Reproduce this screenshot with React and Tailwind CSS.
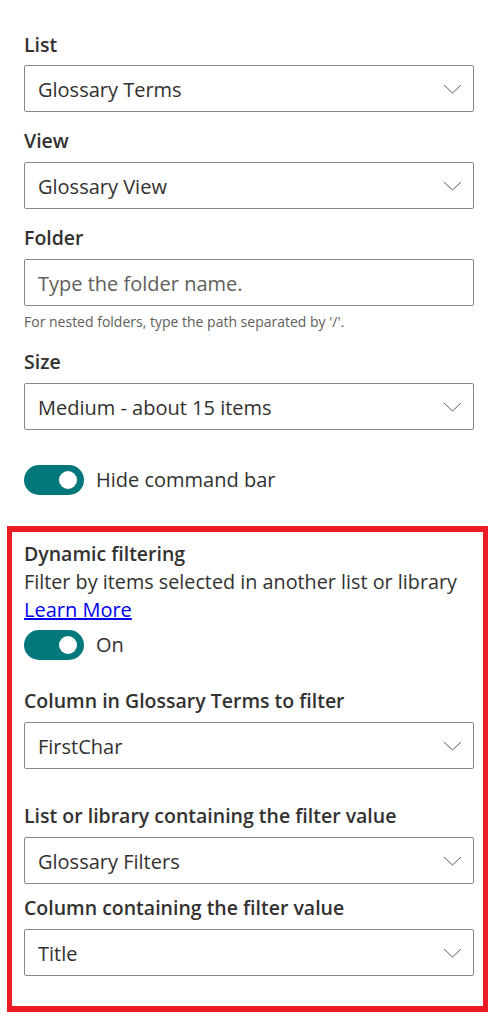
import React from 'react';

const font = "font-['Open_Sans',sans-serif]";

function Chevron() {
  return (
    <svg width="19" height="10" viewBox="0 0 19 10" className="shrink-0">
      <path d="M1 1 L9.5 9 L18 1" fill="none" stroke="#605e5c" strokeWidth="1" />
    </svg>
  );
}

function Label({ children, className = '' }) {
  return <div className={`h-[28px] text-[19.5px] leading-[28px] font-semibold text-[#323130] ${className}`}>{children}</div>;
}

function Dropdown({ value, className = '' }) {
  return (
    <div className={`flex h-[47px] items-center rounded-[2px] border border-[#8a8886] pl-[13px] pr-[11px] ${className}`}>
      <span className="pt-[3px] text-[20px] leading-[28px] text-[#323130]">{value}</span>
      <span className="ml-auto">
        <Chevron />
      </span>
    </div>
  );
}

function Toggle({ label, className = '' }) {
  return (
    <div className={`flex items-center gap-[12px] ${className}`}>
      <div className="flex h-[30px] w-[60px] items-center justify-end rounded-full bg-[#03787c] pr-[7px]">
        <div className="h-[18px] w-[18px] rounded-full bg-white" />
      </div>
      <span className="text-[20px] leading-[28px] text-[#323130]">{label}</span>
    </div>
  );
}

export default function App() {
  return (
    <div className={`min-h-screen w-[498px] bg-white pt-[31px] pb-[19px] ${font}`}>
      <div className="px-6">
        <Label>List</Label>
        <Dropdown value="Glossary Terms" className="mt-[6px]" />

        <Label className="mt-[15px]">View</Label>
        <Dropdown value="Glossary View" className="mt-[7px]" />

        <Label className="mt-[15px]">Folder</Label>
        <div className="mt-[7px] flex h-[47px] items-center rounded-[2px] border border-[#8a8886] pl-[13px]">
          <span className="pt-[3px] text-[20px] leading-[28px] text-[#605e5c]">Type the folder name.</span>
        </div>
        <div className="mt-[6px] h-[20px] text-[14px] leading-[20px] text-[#605e5c]">
          For nested folders, type the path separated by '/'.
        </div>

        <Label className="mt-[16px]">Size</Label>
        <Dropdown value="Medium - about 15 items" className="mt-[7px]" />

        <Toggle label="Hide command bar" className="mt-[35px]" />
      </div>

      <div className="ml-[7px] mt-[31px] w-[481px] border-[5px] border-t-[6px] border-b-[6px] border-[#ec1c24] pl-[12px] pr-[9px] pt-[8px] pb-[30px]">
        <Label>Dynamic filtering</Label>
        <div className="text-[19.8px] leading-[28px] text-[#323130]">Filter by items selected in another list or library</div>
        <a href="#" className="block w-fit text-[20px] leading-[28px] text-[#0000ee] underline">Learn More</a>
        <Toggle label="On" className="mt-[6px]" />

        <Label className="mt-[27px]">Column in Glossary Terms to filter</Label>
        <Dropdown value="FirstChar" className="mt-[7px]" />

        <Label className="mt-[33px]">List or library containing the filter value</Label>
        <Dropdown value="Glossary Filters" className="mt-[7px]" />

        <Label className="mt-[10px]">Column containing the filter value</Label>
        <Dropdown value="Title" className="mt-[7px]" />
      </div>
    </div>
  );
}
